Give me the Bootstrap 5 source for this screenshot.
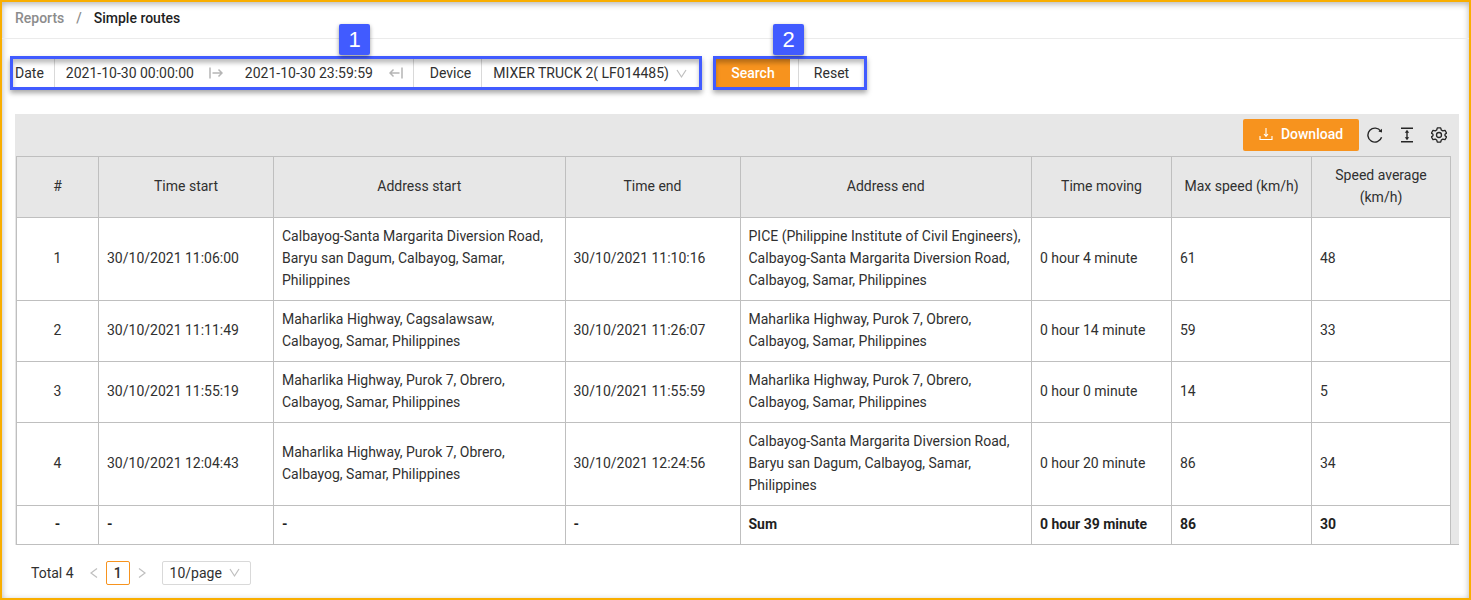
<!DOCTYPE html>
<html lang="en">
<head>
<meta charset="utf-8">
<meta name="viewport" content="width=device-width, initial-scale=1">
<title>Simple routes</title>
<link href="https://cdn.jsdelivr.net/npm/bootstrap@5.3.0/dist/css/bootstrap.min.css" rel="stylesheet">
<style>
body { font-family: Roboto, "Liberation Sans", sans-serif; font-size: 14px; line-height: 22px; color: #303030; background: #fff; }
.page-frame { border: 2px solid #f9ae00; box-shadow: inset 0 2px 6px rgba(0,0,0,.3); }
.crumbs { padding: 5px 13px 9px; border-bottom: 1px solid #ebebeb; font-weight: 500; }
.crumbs a { color: #8c8c8c; text-decoration: none; }
.crumbs .active { color: #1f1f1f; }
.crumbs .breadcrumb { --bs-breadcrumb-divider-color: #8c8c8c; --bs-breadcrumb-item-padding-x: 12px; margin: 0; font-size: 14px; }
.filters { padding: 17px 8px 24px; gap: 11px; }
.step { position: relative; height: 34px; padding: 3px; }
.step::after { content: ""; position: absolute; inset: 0; border: 3px solid #415bff; box-shadow: 0 3px 5px rgba(0,0,0,.35), inset 0 4px 4px rgba(0,0,0,.25); pointer-events: none; }
.step-no { position: absolute; z-index: 2; top: -32px; width: 31px; height: 31px; background: #415bff; color: #fff; font-family: "Liberation Sans", sans-serif; font-size: 22px; line-height: 31px; text-align: center; border-radius: 2px; box-shadow: 0 2px 4px rgba(0,0,0,.4); }
.step-fields { width: 692px; }
.step-fields .step-no { left: 329px; }
.step-actions { width: 154px; }
.step-actions .step-no { left: 60px; }
.field-label { padding: 0 10px 0 2px; border-right: 1px solid #d9d9d9; align-self: stretch; display: flex; align-items: center; }
.field-label.inner { padding: 0 10px 0 16px; border-left: 1px solid #d9d9d9; }
.date-box { width: 154px; padding: 0 0 0 11px; border: 0; background: transparent; color: inherit; outline: 0; }
.date-box.end { width: 156px; padding-left: 12px; }
.range-icon { margin-right: 10px; flex: none; }
.device-box { position: relative; flex: 1; }
.device-box select { width: 100%; padding: 0 24px 0 11px; border: 0; background: transparent; color: inherit; appearance: none; outline: 0; }
.device-box svg { position: absolute; right: 12px; top: 7px; pointer-events: none; }
.step-actions .btn { border: 0; border-radius: 0; padding: 0; font-size: 14px; line-height: 28px; }
.btn-search { width: 74px; background: #f7931e; color: #fff; font-weight: 500; }
.btn-search:hover { background: #e58312; color: #fff; }
.btn-reset { flex: 1; margin-left: 8px; color: #303030; }
.step-actions .btn-reset { border-left: 1px solid #d9d9d9; }
.report { margin: 0 10px 0 13px; }
.tools { background: #e7e7e7; height: 42px; padding: 0 12px 0 0; }
.btn-download { width: 116px; height: 32px; padding: 0 0 2px; border: 0; border-radius: 2px; background: #f7931e; color: #fff; font-size: 14px; font-weight: 500; gap: 8px; }
.btn-download:hover { background: #e58312; color: #fff; }
.btn-tool { width: 16px; height: 16px; margin-left: 16px; padding: 0; border: 0; line-height: 0; color: #262626; }
.btn-download + .btn-tool { margin-left: 8px; }
.grid-wrap { background: #e7e7e7; padding: 0 8px 0 1px; position: relative; }
.grid-wrap::after { content: ""; position: absolute; left: 1px; right: 0; bottom: 0; height: 1px; background: #bfbfbf; }
.routes { width: 100%; table-layout: fixed; border-collapse: separate; border-spacing: 0; border: solid #bfbfbf; border-width: 1px 0 0 1px; background: #fff; }
.routes th, .routes td { padding: 7px 8px 9px; border: solid #bfbfbf; border-width: 0 1px 1px 0; vertical-align: middle; }
.routes thead th { background: #e7e7e7; font-weight: 400; text-align: center; }
.routes td:first-child { text-align: center; }
.routes tfoot td { font-weight: 700; color: #1f1f1f; }
.c-no { width: 82px; } .c-time { width: 175px; } .c-num { width: 140px; } .c-last { width: 139px; }
.pager { padding: 16px 29px 13px; }
.pager button { border: 0; background: transparent; padding: 0; color: inherit; line-height: 0; }
.pager .current { width: 24px; height: 24px; margin: 0 8px; border: 1px solid #f7931e; border-radius: 2px; font-weight: 500; line-height: 22px; }
.page-size { position: relative; margin-left: 16px; }
.page-size select { width: 89px; height: 24px; padding: 0 0 1px 7px; border: 1px solid #d9d9d9; border-radius: 2px; background: #fff; color: inherit; appearance: none; }
.page-size svg { position: absolute; right: 11px; top: 7px; pointer-events: none; }
</style>
</head>
<body>
<div class="page-frame min-vh-100">
  <nav class="crumbs" aria-label="breadcrumb">
    <ol class="breadcrumb">
      <li class="breadcrumb-item"><a href="#">Reports</a></li>
      <li class="breadcrumb-item active" aria-current="page">Simple routes</li>
    </ol>
  </nav>

  <form class="filters d-flex flex-wrap" onsubmit="return false">
    <div class="step step-fields d-flex align-items-center">
      <span class="step-no">1</span>
      <label class="field-label" for="from">Date</label>
      <input class="date-box" id="from" type="text" value="2021-10-30 00:00:00">
      <svg class="range-icon" width="14" height="14" viewBox="0 0 14 14" fill="none" stroke="#b5b5b5" stroke-width="1.5"><path d="M1 1.500v11M3.500 7H13M9.500 3.500L13 7l-3.500 3.500"/></svg>
      <input class="date-box end" id="to" type="text" value="2021-10-30 23:59:59" aria-label="End date">
      <svg class="range-icon" width="14" height="14" viewBox="0 0 14 14" fill="none" stroke="#b5b5b5" stroke-width="1.5"><path d="M13 1.500v11M10.500 7H1M4.500 3.500L1 7l3.500 3.500"/></svg>
      <label class="field-label inner" for="device">Device</label>
      <div class="device-box">
        <select id="device"><option>MIXER TRUCK 2( LF014485)</option></select>
        <svg width="11" height="10" viewBox="0 0 11 10" fill="none" stroke="#bfbfbf" stroke-width="1.2"><path d="M1 1l4.500 7L10 1"/></svg>
      </div>
    </div>
    <div class="step step-actions d-flex">
      <span class="step-no">2</span>
      <button class="btn btn-search" type="submit">Search</button>
      <button class="btn btn-reset" type="reset">Reset</button>
    </div>
  </form>

  <main class="report">
    <div class="tools d-flex align-items-center justify-content-end">
      <button class="btn btn-download d-flex align-items-center justify-content-center" type="button">
        <svg width="14" height="14" viewBox="0 0 14 14" fill="none" stroke="#fff" stroke-width="1.1"><path d="M1 9v3.500h12V9M7 1v8M5 7l2 2.300L9 7"/></svg>
        Download
      </button>
      <button class="btn btn-tool" type="button" aria-label="Reload">
        <svg width="16" height="16" viewBox="0 0 16 16" fill="none" stroke="currentColor" stroke-width="1.4"><path d="M13.800 4.300A7 7 0 1 0 14.600 10.200"/><path d="M15 1.800v3.600l-3.600-.8z" fill="currentColor" stroke="none"/></svg>
      </button>
      <button class="btn btn-tool" type="button" aria-label="Density">
        <svg width="16" height="16" viewBox="0 0 16 16" fill="none" stroke="currentColor" stroke-width="1.4"><path d="M2 1.200h12M2 14.800h12M8 4v8"/><path d="M8 2.800l2.200 2.900H5.800zM8 13.200l2.200-2.900H5.800z" fill="currentColor" stroke="none"/></svg>
      </button>
      <button class="btn btn-tool" type="button" aria-label="Settings">
        <svg width="16" height="16" viewBox="0 0 16 16" fill="none" stroke="currentColor" stroke-width="1.300" stroke-linejoin="round"><path d="M6.300.8h3.400l.6 2.200 1.500.9 2.200-.6 1.600 2.800L14 7.200v1.600l1.600 1.100-1.600 2.800-2.200-.6-1.500.9-.6 2.200H6.300L5.700 13l-1.500-.9-2.200.6L.4 9.900 2 8.800V7.200L.4 6.100 2 3.300l2.200.6L5.700 3z"/><circle cx="8" cy="8" r="2.500"/></svg>
      </button>
    </div>
    <div class="grid-wrap">
      <table class="routes">
        <colgroup><col class="c-no"><col class="c-time"><col><col class="c-time"><col><col class="c-num"><col class="c-num"><col class="c-last"></colgroup>
        <thead>
          <tr><th>#</th><th>Time start</th><th>Address start</th><th>Time end</th><th>Address end</th><th>Time moving</th><th>Max speed (km/h)</th><th>Speed average (km/h)</th></tr>
        </thead>
        <tbody>
          <tr><td>1</td><td>30/10/2021 11:06:00</td><td>Calbayog-Santa Margarita Diversion Road, Baryu san Dagum, Calbayog, Samar, Philippines</td><td>30/10/2021 11:10:16</td><td>PICE (Philippine Institute of Civil Engineers), Calbayog-Santa Margarita Diversion Road, Calbayog, Samar, Philippines</td><td>0 hour 4 minute</td><td>61</td><td>48</td></tr>
          <tr><td>2</td><td>30/10/2021 11:11:49</td><td>Maharlika Highway, Cagsalawsaw, Calbayog, Samar, Philippines</td><td>30/10/2021 11:26:07</td><td>Maharlika Highway, Purok 7, Obrero, Calbayog, Samar, Philippines</td><td>0 hour 14 minute</td><td>59</td><td>33</td></tr>
          <tr><td>3</td><td>30/10/2021 11:55:19</td><td>Maharlika Highway, Purok 7, Obrero, Calbayog, Samar, Philippines</td><td>30/10/2021 11:55:59</td><td>Maharlika Highway, Purok 7, Obrero, Calbayog, Samar, Philippines</td><td>0 hour 0 minute</td><td>14</td><td>5</td></tr>
          <tr><td>4</td><td>30/10/2021 12:04:43</td><td>Maharlika Highway, Purok 7, Obrero, Calbayog, Samar, Philippines</td><td>30/10/2021 12:24:56</td><td>Calbayog-Santa Margarita Diversion Road, Baryu san Dagum, Calbayog, Samar, Philippines</td><td>0 hour 20 minute</td><td>86</td><td>34</td></tr>
        </tbody>
        <tfoot>
          <tr><td>-</td><td>-</td><td>-</td><td>-</td><td>Sum</td><td>0 hour 39 minute</td><td>86</td><td>30</td></tr>
        </tfoot>
      </table>
    </div>
  </main>

  <div class="pager d-flex align-items-center">
    <span class="me-3">Total 4</span>
    <button type="button" aria-label="Previous page"><svg width="8" height="12" viewBox="0 0 8 12" fill="none" stroke="#bfbfbf" stroke-width="1.200"><path d="M7 1.500L1 6l6 4.500"/></svg></button>
    <button class="current" type="button">1</button>
    <button type="button" aria-label="Next page"><svg width="8" height="12" viewBox="0 0 8 12" fill="none" stroke="#bfbfbf" stroke-width="1.200"><path d="M1 1.500L7 6l-6 4.500"/></svg></button>
    <div class="page-size">
      <select aria-label="Rows per page"><option>10/page</option></select>
      <svg width="11" height="10" viewBox="0 0 11 10" fill="none" stroke="#bfbfbf" stroke-width="1.200"><path d="M1 1l4.500 7L10 1"/></svg>
    </div>
  </div>
</div>
<script src="https://cdn.jsdelivr.net/npm/bootstrap@5.3.0/dist/js/bootstrap.bundle.min.js"></script>
</body>
</html>
